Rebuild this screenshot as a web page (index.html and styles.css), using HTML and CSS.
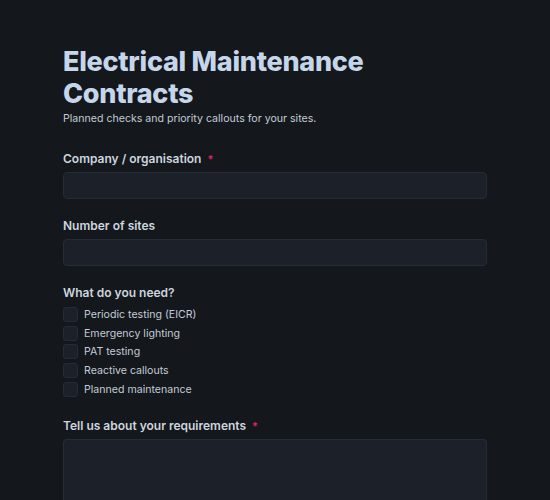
FILE: index.html
```html
<!DOCTYPE html>
<html lang="en">
<head>
<meta charset="utf-8">
<title>Electrical Maintenance Contracts</title>
<link rel="stylesheet" href="styles.css">
</head>
<body>
<main class="page">
  <header class="intro">
    <h1 class="title">Electrical Maintenance Contracts</h1>
    <p class="subtitle">Planned checks and priority callouts for your sites.</p>
  </header>
  <form class="form">
    <div class="field">
      <label class="label" for="company">Company / organisation <span class="req">*</span></label>
      <input class="input" id="company" type="text">
    </div>
    <div class="field">
      <label class="label" for="sites">Number of sites</label>
      <input class="input" id="sites" type="text">
    </div>
    <div class="field">
      <div class="label">What do you need?</div>
      <div class="checks">
        <label class="check"><span class="box"></span>Periodic testing (EICR)</label>
        <label class="check"><span class="box"></span>Emergency lighting</label>
        <label class="check"><span class="box"></span>PAT testing</label>
        <label class="check"><span class="box"></span>Reactive callouts</label>
        <label class="check"><span class="box"></span>Planned maintenance</label>
      </div>
    </div>
    <div class="field">
      <label class="label" for="req">Tell us about your requirements <span class="req">*</span></label>
      <textarea class="textarea" id="req"></textarea>
    </div>
  </form>
</main>
</body>
</html>
```

FILE: styles.css
```css
* { box-sizing: border-box; }
html, body { margin: 0; padding: 0; }
body {
  background: #14171c;
  font-family: Inter, "Noto Sans", sans-serif;
  color: #c9d1dc;
}
.page {
  width: 424px;
  margin-left: 63px;
  padding-top: 46px;
}
.title {
  margin: 0;
  font-size: 27px;
  line-height: 32px;
  font-weight: 800;
  color: #c6d6ea;
  letter-spacing: -0.01em;
}
.subtitle {
  margin: 1px 0 0;
  font-size: 10.6px;
  line-height: 16px;
  color: #c3cbd6;
}
.form {
  margin-top: 23px;
  display: flex;
  flex-direction: column;
  gap: 18px;
}
.field {
  display: flex;
  flex-direction: column;
  gap: 4px;
}
.label {
  font-size: 12px;
  line-height: 18px;
  font-weight: 600;
  color: #cdd5df;
}
.req {
  color: #e0245e;
  margin-left: 3px;
  font-size: 11px;
}
.input {
  height: 27px;
  width: 100%;
  background: #1b2029;
  border: 1px solid #262c36;
  border-radius: 4px;
  margin: 0;
}
.checks {
  display: flex;
  flex-direction: column;
  margin-top: -1px;
}
.check {
  display: flex;
  align-items: center;
  gap: 6px;
  height: 18.75px;
  font-size: 10.6px;
  color: #c3cbd6;
}
.box {
  width: 15px;
  height: 15px;
  background: #1b2029;
  border: 1px solid #262c36;
  border-radius: 3px;
  flex: none;
}
.textarea {
  width: 100%;
  height: 62px;
  background: #1b2029;
  border: 1px solid #262c36;
  border-bottom: 0;
  border-radius: 4px 4px 0 0;
  margin: 0;
  resize: none;
  display: block;
}
```
